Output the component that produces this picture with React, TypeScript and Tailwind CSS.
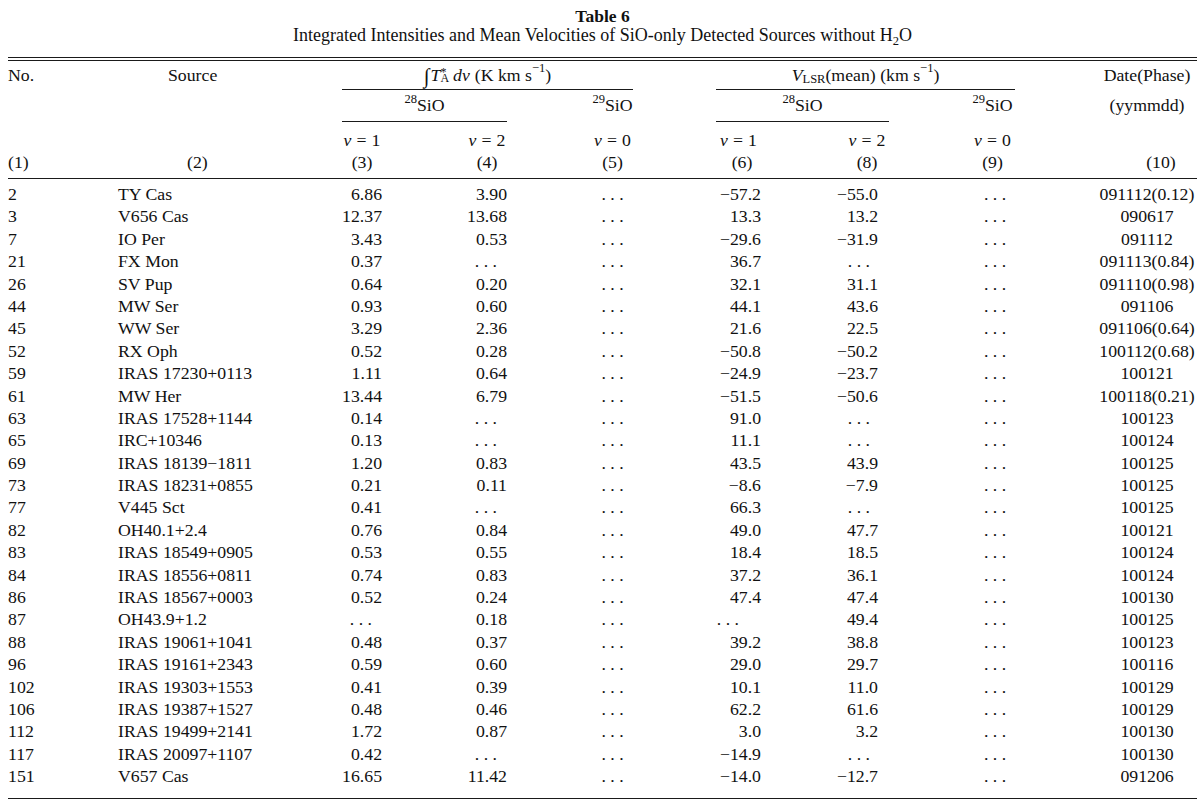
import React from "react";

const TPL =
  "grid grid-cols-[110px_224px_40px_85px_40px_85px_41px_83px_45px_84px_44px_81px_45px_82px_100px]";

type Cell = string | null;
type Row = [string, string, Cell, Cell, Cell, Cell, string];

const rows: Row[] = [
  ["2", "TY Cas", "6.86", "3.90", "−57.2", "−55.0", "091112(0.12)"],
  ["3", "V656 Cas", "12.37", "13.68", "13.3", "13.2", "090617"],
  ["7", "IO Per", "3.43", "0.53", "−29.6", "−31.9", "091112"],
  ["21", "FX Mon", "0.37", null, "36.7", null, "091113(0.84)"],
  ["26", "SV Pup", "0.64", "0.20", "32.1", "31.1", "091110(0.98)"],
  ["44", "MW Ser", "0.93", "0.60", "44.1", "43.6", "091106"],
  ["45", "WW Ser", "3.29", "2.36", "21.6", "22.5", "091106(0.64)"],
  ["52", "RX Oph", "0.52", "0.28", "−50.8", "−50.2", "100112(0.68)"],
  ["59", "IRAS 17230+0113", "1.11", "0.64", "−24.9", "−23.7", "100121"],
  ["61", "MW Her", "13.44", "6.79", "−51.5", "−50.6", "100118(0.21)"],
  ["63", "IRAS 17528+1144", "0.14", null, "91.0", null, "100123"],
  ["65", "IRC+10346", "0.13", null, "11.1", null, "100124"],
  ["69", "IRAS 18139−1811", "1.20", "0.83", "43.5", "43.9", "100125"],
  ["73", "IRAS 18231+0855", "0.21", "0.11", "−8.6", "−7.9", "100125"],
  ["77", "V445 Sct", "0.41", null, "66.3", null, "100125"],
  ["82", "OH40.1+2.4", "0.76", "0.84", "49.0", "47.7", "100121"],
  ["83", "IRAS 18549+0905", "0.53", "0.55", "18.4", "18.5", "100124"],
  ["84", "IRAS 18556+0811", "0.74", "0.83", "37.2", "36.1", "100124"],
  ["86", "IRAS 18567+0003", "0.52", "0.24", "47.4", "47.4", "100130"],
  ["87", "OH43.9+1.2", null, "0.18", null, "49.4", "100125"],
  ["88", "IRAS 19061+1041", "0.48", "0.37", "39.2", "38.8", "100123"],
  ["96", "IRAS 19161+2343", "0.59", "0.60", "29.0", "29.7", "100116"],
  ["102", "IRAS 19303+1553", "0.41", "0.39", "10.1", "11.0", "100129"],
  ["106", "IRAS 19387+1527", "0.48", "0.46", "62.2", "61.6", "100129"],
  ["112", "IRAS 19499+2141", "1.72", "0.87", "3.0", "3.2", "100130"],
  ["117", "IRAS 20097+1107", "0.42", null, "−14.9", null, "100130"],
  ["151", "V657 Cas", "16.65", "11.42", "−14.0", "−12.7", "091206"],
];

const Ell = () => <span className="whitespace-pre">. . .</span>;

const Sup = ({ children }: { children: React.ReactNode }) => (
  <span className="relative -top-[6px] text-[12.5px] leading-none">{children}</span>
);

const VEq = ({ n }: { n: string }) => (
  <span className="whitespace-nowrap">
    <i>v</i>
    <span className="mx-[5px]">=</span>
    {n}
  </span>
);

function DataRow({ r }: { r: Row }) {
  const [no, src, c3, c4, c6, c8, date] = r;
  return (
    <div className={`${TPL} h-[22.4px]`}>
      <div className="flex items-center whitespace-nowrap">{no}</div>
      <div className="flex items-center whitespace-nowrap">{src}</div>
      {c3 === null ? (
        <div className="flex items-center justify-end whitespace-nowrap pr-[10px]">
          <Ell />
        </div>
      ) : (
        <div className="flex items-center justify-end whitespace-nowrap">{c3}</div>
      )}
      <div />
      {c4 === null ? (
        <div className="flex items-center justify-end whitespace-nowrap pr-[10px]">
          <Ell />
        </div>
      ) : (
        <div className="flex items-center justify-end whitespace-nowrap">{c4}</div>
      )}
      <div />
      <div className="flex items-center justify-center whitespace-nowrap">
        <Ell />
      </div>
      <div />
      {c6 === null ? (
        <div className="flex items-center justify-end whitespace-nowrap pr-[22px]">
          <Ell />
        </div>
      ) : (
        <div className="flex items-center justify-end whitespace-nowrap">{c6}</div>
      )}
      <div />
      {c8 === null ? (
        <div className="flex items-center justify-end whitespace-nowrap pr-[19px]">
          <Ell />
        </div>
      ) : (
        <div className="flex items-center justify-end whitespace-nowrap pr-[11px]">{c8}</div>
      )}
      <div />
      <div className="flex items-center justify-center whitespace-nowrap pl-[5px]">
        <Ell />
      </div>
      <div />
      <div className="flex items-center justify-center whitespace-nowrap">{date}</div>
    </div>
  );
}

export default function App() {
  return (
    <div className="w-[1200px] h-[808px] overflow-hidden bg-white text-[#111] font-['Liberation_Serif','Times_New_Roman',serif] text-[17.75px]">
      <div className="ml-[8px] w-[1189px] pt-[7px]">
        <div className="h-[19px] text-center leading-[19px] font-bold text-[17.5px]">Table 6</div>
        <div className="h-[19px] text-center leading-[19px] text-[18px] whitespace-nowrap">
          Integrated Intensities and Mean Velocities of SiO-only Detected Sources without H
          <span className="relative top-[4px] text-[12.5px] leading-none">2</span>O
        </div>

        <div className="mt-[12px] h-px bg-[#1a1a1a]" />
        <div className="mt-[2px] h-px bg-[#1a1a1a]" />

        <div className={`${TPL} grid-rows-[28px_1px_31px_1px_7px_22px_22px_5px]`}>
          <div className="col-start-1 row-start-1 flex items-center">No.</div>
          <div className="col-start-2 row-start-1 flex items-center pl-[50px]">Source</div>
          <div className="col-start-3 col-span-5 row-start-1 flex items-center justify-center whitespace-nowrap">
            <span className="relative top-[1px] text-[21px] leading-none mr-[1px]">∫</span>
            <i>T</i>
            <span className="inline-flex flex-col align-[3px] text-[12px] leading-[6px] not-italic">
              <span className="h-[6px]">*</span>
              <span className="h-[6px]">A</span>
            </span>
            <span className="ml-[4px]">
              <i>d</i>
              <i>v</i>
            </span>
            <span className="ml-[5px]">(K km s</span>
            <span className="relative -top-[7px] text-[12.5px] leading-none">−1</span>
            <span>)</span>
          </div>
          <div className="col-start-9 col-span-5 row-start-1 flex items-center justify-center whitespace-nowrap">
            <i>V</i>
            <span className="relative top-[4px] text-[12.5px] leading-none">LSR</span>
            <span>(mean) (km s</span>
            <span className="relative -top-[7px] text-[12.5px] leading-none">−1</span>
            <span>)</span>
          </div>
          <div className="col-start-15 row-start-1 flex items-center justify-center whitespace-nowrap">
            Date(Phase)
          </div>

          <div className="col-start-3 col-span-5 row-start-2 bg-[#1a1a1a]" />
          <div className="col-start-9 col-span-5 row-start-2 bg-[#1a1a1a]" />

          <div className="col-start-3 col-span-3 row-start-3 flex items-center justify-center whitespace-nowrap">
            <Sup>28</Sup>SiO
          </div>
          <div className="col-start-7 row-start-3 flex items-center justify-center whitespace-nowrap">
            <Sup>29</Sup>SiO
          </div>
          <div className="col-start-9 col-span-3 row-start-3 flex items-center justify-center whitespace-nowrap">
            <Sup>28</Sup>SiO
          </div>
          <div className="col-start-13 row-start-3 flex items-center justify-center whitespace-nowrap">
            <Sup>29</Sup>SiO
          </div>
          <div className="col-start-15 row-start-3 flex items-center justify-center whitespace-nowrap">
            (yymmdd)
          </div>

          <div className="col-start-3 col-span-3 row-start-4 bg-[#1a1a1a]" />
          <div className="col-start-9 col-span-3 row-start-4 bg-[#1a1a1a]" />

          <div className="col-start-3 row-start-6 flex items-center justify-center">
            <VEq n="1" />
          </div>
          <div className="col-start-5 row-start-6 flex items-center justify-center">
            <VEq n="2" />
          </div>
          <div className="col-start-7 row-start-6 flex items-center justify-center">
            <VEq n="0" />
          </div>
          <div className="col-start-9 row-start-6 flex items-center justify-center">
            <VEq n="1" />
          </div>
          <div className="col-start-11 row-start-6 flex items-center justify-center">
            <VEq n="2" />
          </div>
          <div className="col-start-13 row-start-6 flex items-center justify-center">
            <VEq n="0" />
          </div>

          <div className="col-start-1 row-start-7 flex items-center">(1)</div>
          <div className="col-start-2 row-start-7 flex items-center pl-[69px]">(2)</div>
          <div className="col-start-3 row-start-7 flex items-center justify-center">(3)</div>
          <div className="col-start-5 row-start-7 flex items-center justify-center">(4)</div>
          <div className="col-start-7 row-start-7 flex items-center justify-center">(5)</div>
          <div className="col-start-9 row-start-7 flex items-center justify-center pl-[7px]">(6)</div>
          <div className="col-start-11 row-start-7 flex items-center justify-center">(8)</div>
          <div className="col-start-13 row-start-7 flex items-center justify-center">(9)</div>
          <div className="col-start-15 row-start-7 flex items-center justify-center pl-[28px]">(10)</div>
        </div>

        <div className="h-px bg-[#1a1a1a]" />

        <div className="pt-[2px]">
          {rows.map((r) => (
            <DataRow key={r[0]} r={r} />
          ))}
        </div>

        <div className="mt-[12px] h-px bg-[#1a1a1a]" />
      </div>
    </div>
  );
}
